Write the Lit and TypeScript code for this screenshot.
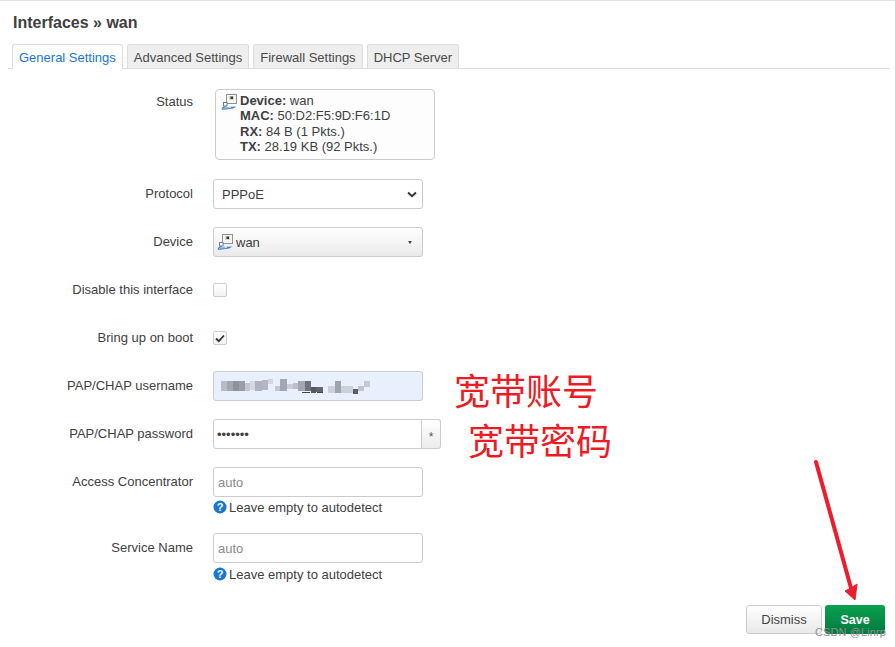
import { LitElement, html, css, svg } from "lit";
import { customElement } from "lit/decorators.js";

const netIcon = html`<svg class="net" width="16" height="16" viewBox="0 0 16 16">
  <rect x="5.5" y="0.5" width="10" height="9" fill="#f4f4f4" stroke="#8d9296"/>
  <rect x="8" y="2" width="5" height="4" fill="#d8d8c8"/>
  <rect x="9.5" y="2.5" width="2.5" height="2.5" fill="#3a3f22"/>
  <path d="M6 9.5 L3.5 11.5" stroke="#8d9296" fill="none"/>
  <rect x="2.5" y="8.5" width="3.5" height="3.5" fill="#fff" stroke="#6f7c92"/>
  <path d="M0.5 15.5 C1.5 12 4 11.5 6 13 L15.5 12.5 L12 14.6 L3 15.8 Z" fill="#3f7fc4"/>
  <path d="M2.5 14.5 C4 13.2 6 14.4 10 13.4" stroke="#d4e3f3" fill="none"/>
</svg>`;

const helpIcon = html`<svg class="help" width="14" height="14" viewBox="0 0 14 14">
  <circle cx="7" cy="7" r="6.5" fill="#1976d2"/>
  <text x="7" y="11" text-anchor="middle" fill="#fff" font-size="11" font-weight="700" font-family="Liberation Sans, sans-serif">?</text>
</svg>`;

const mosaic: [number, number, number, number, string][] = [
  [221, 381, 6, 10, "#b9bcc6"], [227, 381, 6, 10, "#a5a8b2"], [233, 381, 6, 10, "#8f929c"],
  [239, 381, 6, 10, "#9b9ea8"], [245, 383, 5, 8, "#c4c7d1"], [250, 381, 5, 9, "#d5d8e2"],
  [255, 381, 7, 10, "#b0b3bd"], [262, 380, 6, 10, "#b4b7c1"], [268, 379, 5, 5, "#d4d7e1"],
  [275, 386, 5, 5, "#c3c6d0"], [280, 379, 7, 12, "#a4a7b1"], [287, 384, 6, 5, "#cbced8"],
  [293, 383, 5, 6, "#bcbfc9"], [298, 381, 7, 10, "#a3a6b0"], [305, 381, 6, 10, "#6f727c"],
  [311, 387, 5, 6, "#55585f"], [316, 387, 7, 5, "#62656d"], [302, 392, 8, 1, "#444"],
  [317, 392, 6, 1, "#444"],
  [328, 386, 7, 7, "#ccd0da"], [335, 381, 6, 12, "#a0a3ad"], [341, 386, 12, 7, "#ccd0da"],
  [353, 389, 5, 5, "#5b5e66"], [358, 386, 6, 5, "#c0c3cd"], [364, 381, 6, 6, "#c6c9d3"],
];

@customElement("app-root")
export class AppRoot extends LitElement {
  static styles = css`
    :host {
      display: block;
      position: relative;
      width: 895px;
      height: 647px;
      overflow: hidden;
      background: #fff;
      font-family: "Liberation Sans", Arial, sans-serif;
      font-size: 13px;
      color: #404040;
      border-top: 1px solid #e4e4e4;
      box-sizing: border-box;
    }
    .page { display: flex; flex-direction: column; padding: 14px 5px 0 8px; }
    h2 { margin: 0 0 0 5px; font-size: 16px; line-height: 15px; font-weight: 700; color: #404040; height: 29px; }
    .tabs { display: flex; gap: 4px; padding-left: 4px; border-bottom: 1px solid #ddd; height: 24px; }
    .tab {
      box-sizing: border-box; height: 24px; padding: 0 6px; line-height: 25px; font-size: 13px;
      background: #eee; border: 1px solid #ddd; border-bottom: none; border-radius: 3px 3px 0 0; color: #4a4a4a; white-space: nowrap;
    }
    .tab.active { height: 25px; background: #fff; color: #1976d2; }
    .form { display: flex; flex-direction: column; gap: 18px; padding-top: 20px; }
    .row { display: grid; grid-template-columns: 185px 1fr; column-gap: 20px; align-items: start; }
    .label { text-align: right; line-height: 30px; font-size: 13px; color: #404040; white-space: nowrap; }
    .label.top { line-height: 26px; }
    .field { min-height: 30px; display: flex; flex-direction: column; }
    .status-row { min-height: 72px; }
    .status {
      box-sizing: border-box; margin-left: 2px; width: 220px; height: 71px; border: 1px solid #ccc; border-radius: 4px;
      display: flex; gap: 3px; padding: 3px 5px 4px; font-size: 13px; line-height: 15.4px; background: #fdfdfd;
    }
    .status .net { flex: none; margin-top: 1px; }
    .status b { font-weight: 700; }
    .control {
      box-sizing: border-box; width: 210px; height: 30px; border: 1px solid #ccc; border-radius: 3px; background: #fff;
      display: flex; align-items: center; padding: 0 8px; font-size: 13px;
    }
    .select { justify-content: space-between; }
    .select svg { margin-right: -3px; }
    .device { background: linear-gradient(#fff, #e9e9e9); padding: 0 3px; gap: 3px; }
    .device .name { flex: 1; }
    .caret { width: 0; height: 0; border-left: 2.5px solid transparent; border-right: 2.5px solid transparent; border-top: 3px solid #444; margin-right: 7px; }
    .check { display: flex; align-items: center; height: 30px; }
    .box {
      box-sizing: border-box; width: 14px; height: 14px; border: 1px solid #ccc; border-radius: 2px; background: linear-gradient(#fff, #f2f2f2);
      display: flex; align-items: center; justify-content: center;
    }
    .filled { background: #e8f0fe; }
    .mosaic { position: absolute; left: 0; top: 0; pointer-events: none; }
    .pwd { display: flex; }
    .pwd .control { width: 209px; border-radius: 3px 0 0 3px; padding-left: 3px; color: #404040; }
    .star {
      box-sizing: border-box; width: 19px; height: 30px; border: 1px solid #ccc; border-left: none; border-radius: 0 3px 3px 0;
      background: linear-gradient(#fff, #ececec); text-align: center; line-height: 34px; font-size: 12px; color: #555;
    }
    .auto { color: #8a8a8a; padding-left: 4px; }
    .hint { display: flex; align-items: center; gap: 2px; height: 20px; font-size: 13px; color: #404040; }
    .hint.low { margin-top: 1px; }
    .help { flex: none; }
    .tall { margin-bottom: -2px; }
    .actions { display: flex; justify-content: flex-end; gap: 3px; margin-top: 21px; padding-right: 5px; }
    .btn { box-sizing: border-box; height: 29px; border-radius: 3px; text-align: center; line-height: 28px; font-size: 13px; }
    .dismiss { width: 76px; border: 1px solid #ccc; background: linear-gradient(#fff, #e8e8e8); color: #444; }
    .save { width: 60px; line-height: 30px; background: linear-gradient(#0aa050, #007a3d); color: #fff; font-weight: 700; font-size: 12.5px; }
    .note { position: absolute; color: #ed1c24; font-family: "Noto Sans CJK SC", sans-serif; font-size: 36px; line-height: 40px; white-space: nowrap; font-weight: 400; }
    .arrow { position: absolute; left: 0; top: 0; pointer-events: none; }
    .mark { position: absolute; left: 815px; top: 625px; font-size: 11px; line-height: 13px; color: #8f8f8f; white-space: nowrap; letter-spacing: 0.1px; }
  `;

  render() {
    return html`
      <div class="page">
        <h2>Interfaces » wan</h2>
        <div class="tabs">
          <div class="tab active">General Settings</div>
          <div class="tab">Advanced Settings</div>
          <div class="tab">Firewall Settings</div>
          <div class="tab">DHCP Server</div>
        </div>
        <div class="form">
          <div class="row status-row">
            <div class="label top">Status</div>
            <div class="field">
              <div class="status">
                ${netIcon}
                <div>
                  <div><b>Device:</b> wan</div>
                  <div><b>MAC:</b> 50:D2:F5:9D:F6:1D</div>
                  <div><b>RX:</b> 84 B (1 Pkts.)</div>
                  <div><b>TX:</b> 28.19 KB (92 Pkts.)</div>
                </div>
              </div>
            </div>
          </div>
          <div class="row">
            <div class="label">Protocol</div>
            <div class="control select">PPPoE
              <svg width="10" height="7" viewBox="0 0 10 7"><path d="M1 1.5 L5 5.2 L9 1.5" fill="none" stroke="#333" stroke-width="2"/></svg>
            </div>
          </div>
          <div class="row">
            <div class="label">Device</div>
            <div class="control device">${netIcon}<span class="name">wan</span><span class="caret"></span></div>
          </div>
          <div class="row">
            <div class="label">Disable this interface</div>
            <div class="check"><div class="box"></div></div>
          </div>
          <div class="row">
            <div class="label">Bring up on boot</div>
            <div class="check"><div class="box">
              <svg width="10" height="9" viewBox="0 0 10 9"><path d="M1 4.5 L3.8 7.2 L9 1.5" fill="none" stroke="#333" stroke-width="1.8"/></svg>
            </div></div>
          </div>
          <div class="row">
            <div class="label">PAP/CHAP username</div>
            <div class="control filled"></div>
          </div>
          <div class="row">
            <div class="label">PAP/CHAP password</div>
            <div class="pwd">
              <div class="control">•••••••</div>
              <div class="star">*</div>
            </div>
          </div>
          <div class="row tall">
            <div class="label">Access Concentrator</div>
            <div class="field">
              <div class="control auto">auto</div>
              <div class="hint">${helpIcon}Leave empty to autodetect</div>
            </div>
          </div>
          <div class="row">
            <div class="label">Service Name</div>
            <div class="field">
              <div class="control auto">auto</div>
              <div class="hint low">${helpIcon}Leave empty to autodetect</div>
            </div>
          </div>
        </div>
        <div class="actions">
          <div class="btn dismiss">Dismiss</div>
          <div class="btn save">Save</div>
        </div>
      </div>
      <svg class="mosaic" width="895" height="647" viewBox="0 1 895 647">
        ${mosaic.map(([x, y, w, h, c]) => svg`<rect x=${x} y=${y} width=${w} height=${h} fill=${c}></rect>`)}
      </svg>
      <div class="note" style="left:454px;top:368px">宽带账号</div>
      <div class="note" style="left:468px;top:418px">宽带密码</div>
      <svg class="arrow" width="895" height="647" viewBox="0 1 895 647">
        <path d="M816 462 L851 588" stroke="#ed1c2e" stroke-width="4" stroke-linecap="round" fill="none"></path>
        <path d="M845 591 L855 600 L857 584 L851 588 Z" fill="#ed1c2e" stroke="#ed1c2e" stroke-width="1"></path>
      </svg>
      <div class="mark">CSDN @Linrp</div>
    `;
  }
}
